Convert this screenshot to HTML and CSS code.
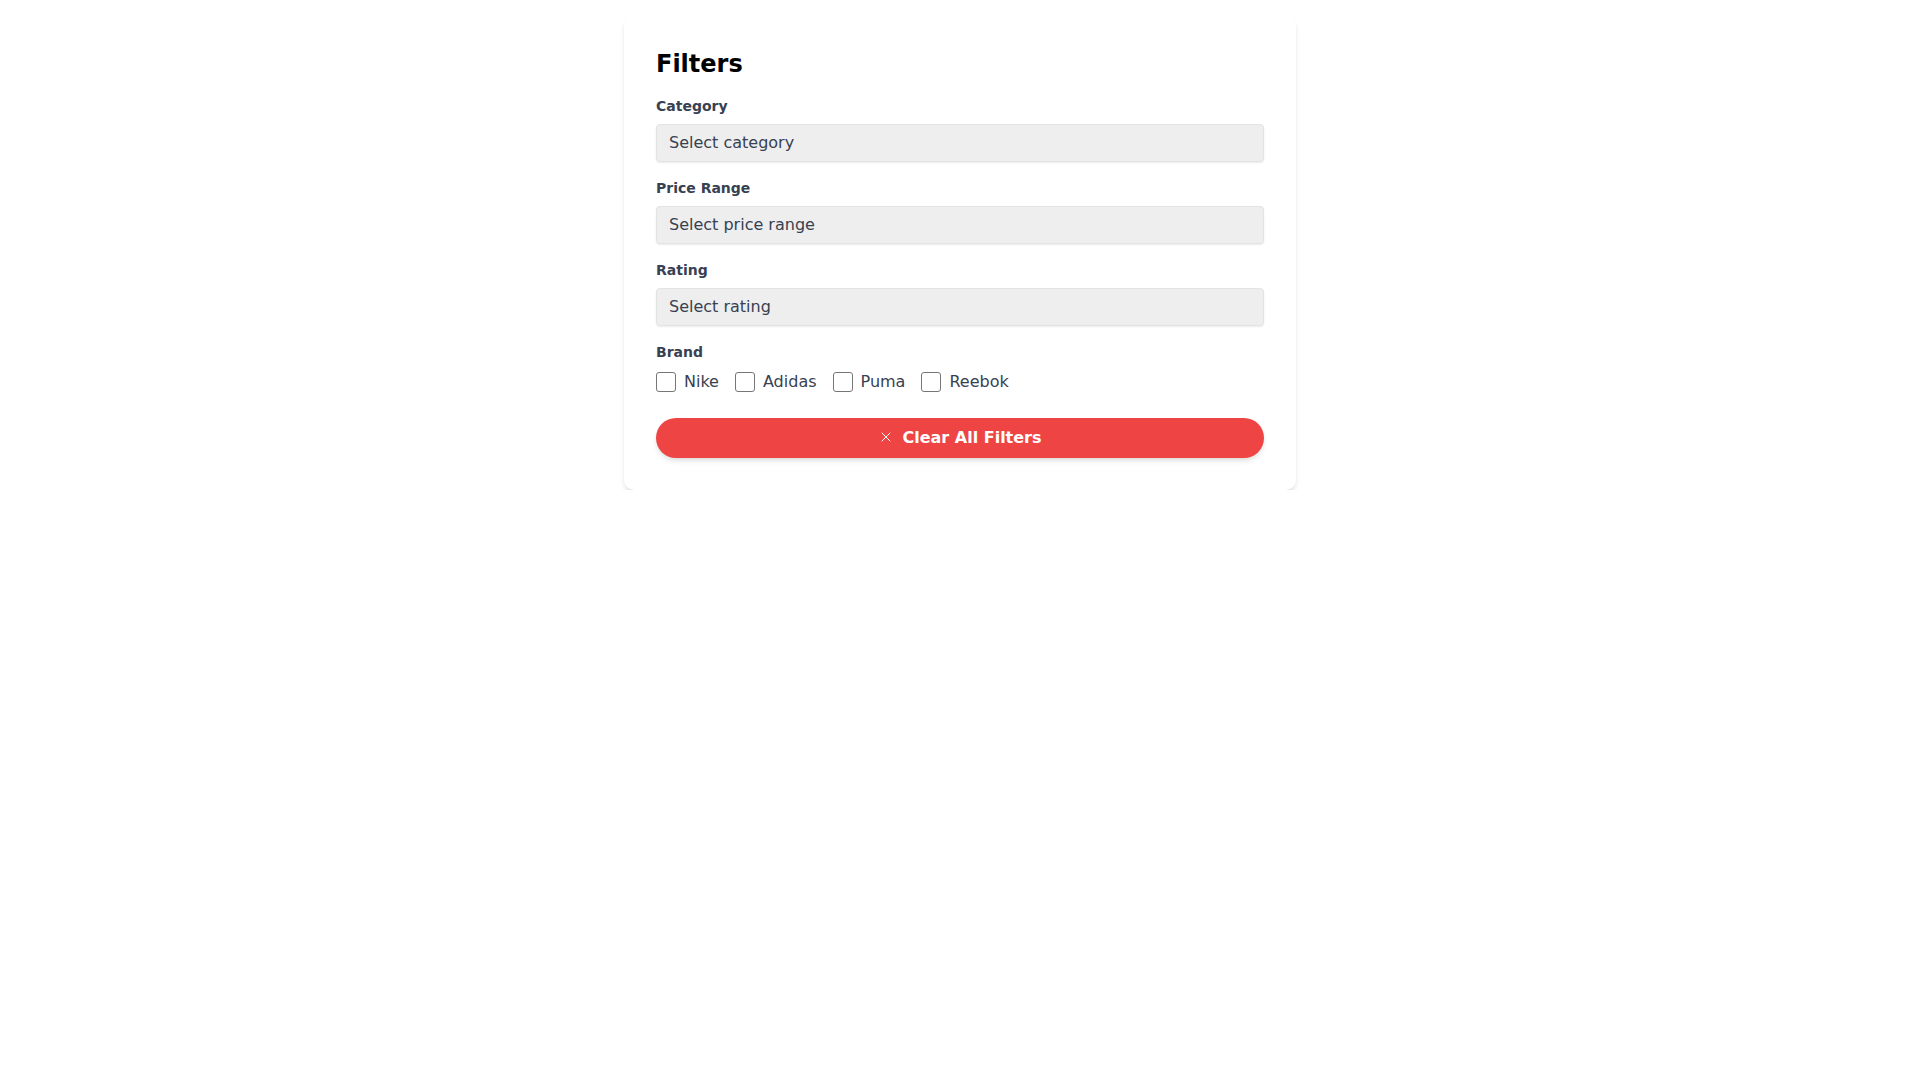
FILE: index.html
```html
<!DOCTYPE html>
<html lang="en">
<head>
    <meta charset="UTF-8">
    <meta name="viewport" content="width=device-width, initial-scale=1.0">
    <title>Filters</title>
    <link rel="stylesheet" href="styles.css">
</head>
<body>
    <div class="page">
        <div class="filter-card">
            <h2 class="filter-title">Filters</h2>

            <!-- Dropdown filters -->
            <div class="filter-group">
                <label class="filter-label">Category</label>
                <button class="filter-select" type="button">Select category</button>
            </div>
            <div class="filter-group">
                <label class="filter-label">Price Range</label>
                <button class="filter-select" type="button">Select price range</button>
            </div>
            <div class="filter-group">
                <label class="filter-label">Rating</label>
                <button class="filter-select" type="button">Select rating</button>
            </div>

            <!-- Brand checkboxes -->
            <div class="filter-group brand-group">
                <label class="filter-label">Brand</label>
                <div class="brand-options">
                    <label class="brand-option"><input type="checkbox" class="brand-check"><span>Nike</span></label>
                    <label class="brand-option"><input type="checkbox" class="brand-check"><span>Adidas</span></label>
                    <label class="brand-option"><input type="checkbox" class="brand-check"><span>Puma</span></label>
                    <label class="brand-option"><input type="checkbox" class="brand-check"><span>Reebok</span></label>
                </div>
            </div>

            <button class="clear-button" type="button">
                <svg class="clear-icon" viewBox="0 0 24 24" fill="none" stroke="currentColor" stroke-width="2" stroke-linecap="round" stroke-linejoin="round">
                    <path d="M18 6 6 18"></path>
                    <path d="m6 6 12 12"></path>
                </svg>
                Clear All Filters
            </button>
        </div>
    </div>
</body>
</html>
```

FILE: styles.css
```css
* {
    margin: 0;
    padding: 0;
    box-sizing: border-box;
    font-family: "DejaVu Sans", sans-serif;
}

body {
    background-color: #fff;
}

.page {
    padding-top: 16px;
}

.filter-card {
    width: 672px;
    margin: 0 auto;
    padding: 32px;
    background-color: #fff;
    border-radius: 10px;
    box-shadow: 0 4px 6px -1px rgba(0, 0, 0, 0.1), 0 2px 4px -2px rgba(0, 0, 0, 0.1);
}

.filter-title {
    font-size: 24px;
    line-height: 32px;
    font-weight: bold;
    color: #000;
    margin-bottom: 16px;
}

.filter-group {
    display: flex;
    flex-direction: column;
    margin-bottom: 16px;
}

.brand-group {
    margin-bottom: 24px;
}

.filter-label {
    font-size: 14px;
    line-height: 20px;
    font-weight: bold;
    color: #374151;
    margin-bottom: 8px;
}

.filter-select {
    display: flex;
    align-items: center;
    width: 100%;
    height: 38px;
    padding: 0 12px 2px;
    font-size: 16px;
    color: #374151;
    text-align: left;
    background-color: #eeeeee;
    border: 1px solid #e3e3e3;
    border-radius: 4px;
    box-shadow: 0 1px 2px rgba(0, 0, 0, 0.08);
    cursor: pointer;
}

.brand-options {
    display: flex;
    gap: 16px;
}

.brand-option {
    display: flex;
    align-items: center;
    gap: 8px;
    font-size: 16px;
    line-height: 24px;
    color: #374151;
    cursor: pointer;
}

.brand-check {
    appearance: none;
    width: 20px;
    height: 20px;
    background-color: #fff;
    border: 1px solid #767676;
    border-radius: 3px;
    cursor: pointer;
}

.clear-button {
    display: flex;
    align-items: center;
    justify-content: center;
    gap: 8px;
    width: 100%;
    height: 40px;
    padding-bottom: 2px;
    font-size: 16px;
    font-weight: bold;
    color: #fff;
    background-color: #ef4444;
    border: none;
    border-radius: 9999px;
    box-shadow: 0 4px 6px -1px rgba(0, 0, 0, 0.1), 0 2px 4px -2px rgba(0, 0, 0, 0.1);
    cursor: pointer;
}

.clear-icon {
    width: 16px;
    height: 16px;
    stroke-width: 1.5;
}
```
